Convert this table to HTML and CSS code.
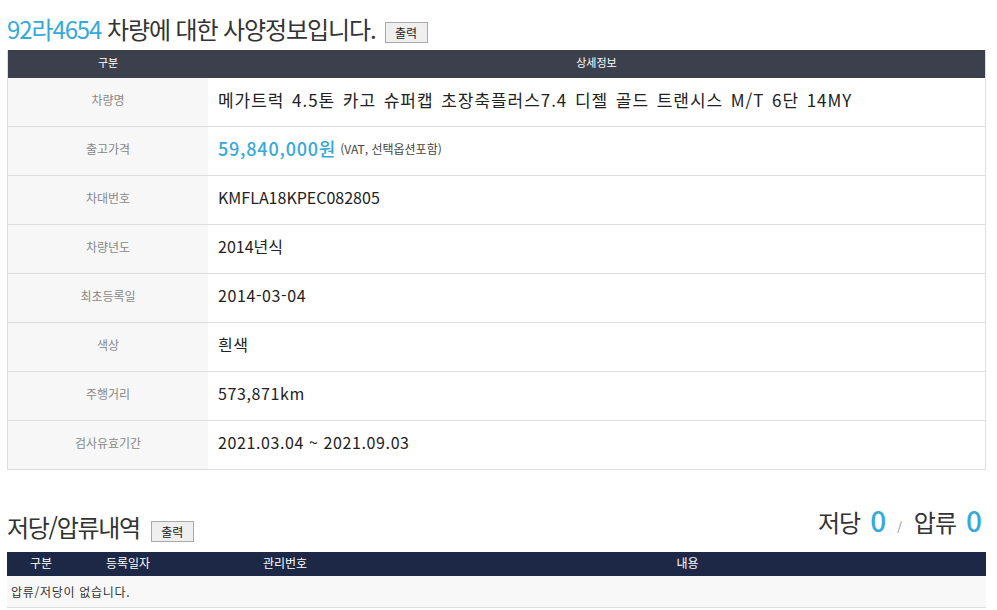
FILE: index.html
```html
<!DOCTYPE html>
<html lang="ko">
<head>
<meta charset="utf-8">
<title>사양정보</title>
<link rel="stylesheet" href="styles.css">
</head>
<body>
<div class="page">
  <div class="title-row">
    <h1 class="title"><span class="plate">92라4654</span> 차량에 대한 사양정보입니다.</h1>
    <button class="print-btn">출력</button>
  </div>

  <div class="spec">
    <div class="spec-head">
      <div class="c-label">구분</div>
      <div class="c-value">상세정보</div>
    </div>
    <div class="spec-row">
      <div class="c-label">차량명</div>
      <div class="c-value wide">메가트럭 4.5톤 카고 슈퍼캡 초장축플러스7.4 디젤 골드 트랜시스 M/T 6단 14MY</div>
    </div>
    <div class="spec-row">
      <div class="c-label">출고가격</div>
      <div class="c-value"><span class="price">59,840,000원</span> <span class="note">(VAT, 선택옵션포함)</span></div>
    </div>
    <div class="spec-row">
      <div class="c-label">차대번호</div>
      <div class="c-value tight">KMFLA18KPEC082805</div>
    </div>
    <div class="spec-row">
      <div class="c-label">차량년도</div>
      <div class="c-value tight">2014년식</div>
    </div>
    <div class="spec-row">
      <div class="c-label">최초등록일</div>
      <div class="c-value">2014-03-04</div>
    </div>
    <div class="spec-row">
      <div class="c-label">색상</div>
      <div class="c-value">흰색</div>
    </div>
    <div class="spec-row">
      <div class="c-label">주행거리</div>
      <div class="c-value">573,871km</div>
    </div>
    <div class="spec-row">
      <div class="c-label">검사유효기간</div>
      <div class="c-value">2021.03.04 ~ 2021.09.03</div>
    </div>
  </div>

  <div class="sec-row">
    <div class="sec-left">
      <h2 class="sec-title">저당/압류내역</h2>
      <button class="print-btn">출력</button>
    </div>
    <div class="counts">
      <span class="cnt-label">저당</span><span class="cnt-num">0</span><span class="cnt-sep">/</span><span class="cnt-label">압류</span><span class="cnt-num">0</span>
    </div>
  </div>

  <div class="lien">
    <div class="lien-head">
      <div>구분</div>
      <div>등록일자</div>
      <div>관리번호</div>
      <div>내용</div>
    </div>
    <div class="lien-empty">압류/저당이 없습니다.</div>
  </div>
</div>
</body>
</html>
```

FILE: styles.css
```css
* { box-sizing: border-box; }
html, body {
  margin: 0;
  padding: 0;
  background: #fff;
}
body {
  font-family: "Noto Sans CJK KR", "Noto Sans", sans-serif;
  color: #333;
}
.page {
  width: 979px;
  margin-left: 7px;
}
.title-row {
  display: flex;
  align-items: flex-end;
  height: 50px;
  padding-bottom: 6px;
}
.title {
  margin: 0;
  font-size: 24px;
  font-weight: 400;
  letter-spacing: -1.1px;
  line-height: 30px;
  color: #333;
}
.plate { color: #35a9d8; }
.print-btn {
  margin-left: 9px;
  width: 43px;
  height: 21px;
  padding: 0;
  border: 1px solid #a9a9a9;
  background: #efefef;
  font-family: "Noto Sans CJK KR", sans-serif;
  font-size: 12px;
  line-height: 18px;
  color: #222;
  margin-bottom: 1px;
}
.spec {
  border-left: 1px solid #ddd;
  border-right: 1px solid #ddd;
}
.spec-head {
  display: grid;
  grid-template-columns: 200px 1fr;
  height: 28px;
  padding-bottom: 5px;
  background: #3c404d;
  color: #fff;
  font-size: 11px;
  align-items: center;
  text-align: center;
}
.spec-row {
  display: grid;
  grid-template-columns: 200px 1fr;
  height: 49px;
  border-bottom: 1px solid #ddd;
}
.spec-row .c-label {
  background: #f7f7f7;
  color: #888;
  font-size: 12px;
  display: flex;
  align-items: center;
  justify-content: center;
  padding-bottom: 6px;
}
.spec-row .c-value {
  display: flex;
  align-items: center;
  padding-left: 10px;
  padding-bottom: 6px;
  font-size: 16px;
  letter-spacing: 0.6px;
  color: #222;
  white-space: nowrap;
}
.spec-row .c-value.wide {
  font-size: 17px;
  letter-spacing: 0.95px;
  word-spacing: 2px;
}
.spec-row .c-value.tight { letter-spacing: 0; }
.price {
  color: #35a9d8;
  font-size: 18px;
  font-weight: 500;
  letter-spacing: 0.8px;
  margin-right: 4px;
}
.note {
  font-size: 12px;
  color: #444;
  letter-spacing: 0;
}
.sec-row {
  display: flex;
  justify-content: space-between;
  align-items: flex-end;
  height: 82px;
  padding-bottom: 8px;
}
.sec-left {
  display: flex;
  align-items: flex-end;
}
.sec-title {
  margin: 0;
  font-size: 24px;
  font-weight: 400;
  letter-spacing: -1.3px;
  line-height: 34px;
  color: #333;
}
.sec-left .print-btn { margin-bottom: 2px; margin-left: 11px; }
.counts {
  padding-right: 4px;
  line-height: 34px;
  white-space: nowrap;
}
.cnt-label {
  font-size: 24px;
  color: #333;
  letter-spacing: -1px;
}
.cnt-num {
  font-size: 28px;
  color: #35a9d8;
  font-weight: 500;
  margin-left: 10px;
}
.cnt-sep {
  font-size: 12px;
  color: #888;
  margin: 0 12px 0 11px;
}
.lien-head {
  display: grid;
  grid-template-columns: 68px 106px 208px 1fr;
  height: 24px;
  padding-bottom: 3px;
  background: #1c2846;
  color: #fff;
  font-size: 12px;
  align-items: center;
  text-align: center;
}
.lien-empty {
  height: 32px;
  background: #f8f8f8;
  border-bottom: 1px solid #ddd;
  font-size: 12px;
  letter-spacing: 0.7px;
  color: #333;
  display: flex;
  align-items: center;
  padding-left: 4px;
}
```
